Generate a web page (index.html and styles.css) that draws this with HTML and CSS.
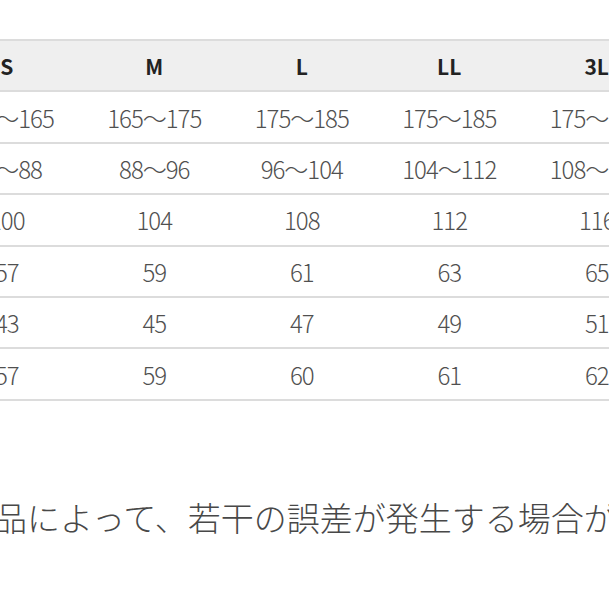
FILE: index.html
```html
<!DOCTYPE html>
<html lang="ja">
<head>
<meta charset="utf-8">
<link rel="stylesheet" href="styles.css">
</head>
<body>
<div class="page">
  <div class="table">
    <div class="row head">
      <div class="cell">S</div><div class="cell">M</div><div class="cell">L</div><div class="cell">LL</div><div class="cell">3L</div>
    </div>
    <div class="row">
      <div class="cell">155〜165</div><div class="cell">165〜175</div><div class="cell">175〜185</div><div class="cell">175〜185</div><div class="cell">175〜185</div>
    </div>
    <div class="row">
      <div class="cell">80〜88</div><div class="cell">88〜96</div><div class="cell">96〜104</div><div class="cell">104〜112</div><div class="cell">108〜116</div>
    </div>
    <div class="row">
      <div class="cell">100</div><div class="cell">104</div><div class="cell">108</div><div class="cell">112</div><div class="cell">116</div>
    </div>
    <div class="row">
      <div class="cell">57</div><div class="cell">59</div><div class="cell">61</div><div class="cell">63</div><div class="cell">65</div>
    </div>
    <div class="row">
      <div class="cell">43</div><div class="cell">45</div><div class="cell">47</div><div class="cell">49</div><div class="cell">51</div>
    </div>
    <div class="row">
      <div class="cell">57</div><div class="cell">59</div><div class="cell">60</div><div class="cell">61</div><div class="cell">62</div>
    </div>
  </div>
  <p class="note">商品によって、若干の誤差が発生する場合があります。</p>
</div>
</body>
</html>
```
FILE: styles.css
```css
html, body {
  margin: 0;
  padding: 0;
  background: #ffffff;
}
body {
  width: 609px;
  height: 609px;
  overflow: hidden;
  font-family: "Noto Sans CJK JP", "Noto Sans", sans-serif;
}
.page {
  padding-top: 39px;
}
.table {
  width: 737.5px;
  margin-left: -67px;
  border-top: 2px solid #dcdcdc;
  display: flex;
  flex-direction: column;
}
.row {
  display: grid;
  grid-template-columns: repeat(5, 1fr);
  height: 51.4px;
  box-sizing: border-box;
  border-bottom: 2px solid #dcdcdc;
}
.cell {
  display: flex;
  align-items: center;
  justify-content: center;
  font-size: 24px;
  font-weight: 300;
  letter-spacing: -1px;
  color: #505050;
  white-space: nowrap;
}
.head {
  background: #efefef;
}
.head .cell {
  font-size: 21px;
  font-weight: 700;
  letter-spacing: 0;
  color: #222222;
}
.note {
  margin: 97px 0 0 -39px;
  font-size: 33px;
  font-weight: 300;
  color: #484848;
  white-space: nowrap;
  line-height: 1.2;
}
```
